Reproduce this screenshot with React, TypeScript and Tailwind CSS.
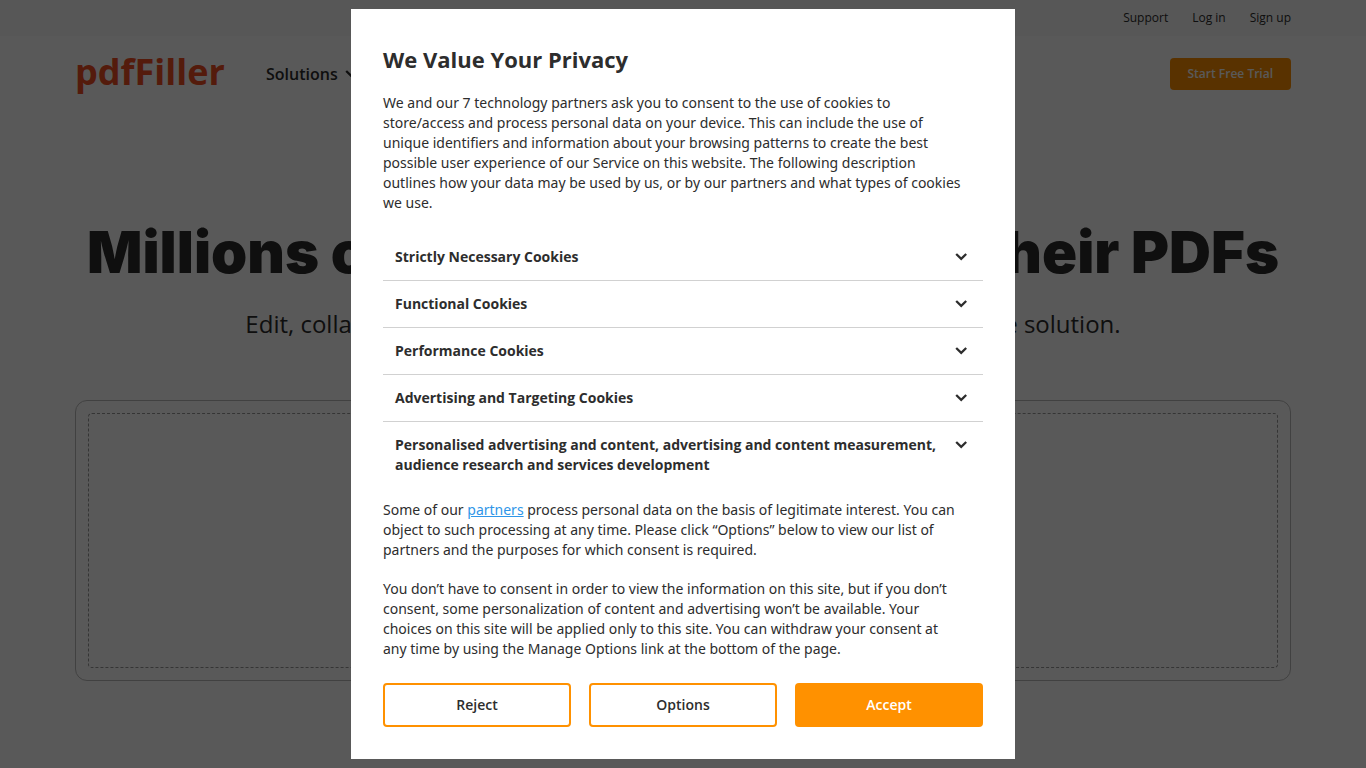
import React from "react";

const cookieGroups = [
  "Strictly Necessary Cookies",
  "Functional Cookies",
  "Performance Cookies",
  "Advertising and Targeting Cookies",
  "Personalised advertising and content, advertising and content measurement, audience research and services development",
];

function Chevron({ className }: { className: string }) {
  return (
    <svg viewBox="0 0 12 8" className={className} fill="none" stroke="currentColor" strokeWidth="2.3" aria-hidden="true">
      <path d="M1.2 1 L6.2 5.8 L11.2 1" />
    </svg>
  );
}

function TopBar() {
  return (
    <div className="h-9 bg-[#f8f8f8]">
      <nav className="mx-auto flex h-full max-w-[1216px] items-center justify-end gap-6 text-[12px] leading-4">
        <a href="#support">Support</a>
        <a href="#login">Log in</a>
        <a href="#signup">Sign up</a>
      </nav>
    </div>
  );
}

function Header() {
  return (
    <header className="mx-auto flex h-[76px] max-w-[1216px] items-center">
      <a href="#home" className="w-[147px] pb-1 text-[36px] leading-10 font-bold text-[#f04e23]">
        pdfFiller
      </a>
      <button type="button" className="ml-11 flex items-center gap-[7px] text-[16px] leading-6 font-semibold">
        Solutions
        <Chevron className="h-2 w-3" />
      </button>
      <button type="button" className="ml-auto h-8 rounded-[4px] bg-[#ff9100] px-[18px] text-[12px] leading-4 font-semibold text-white">
        Start Free Trial
      </button>
    </header>
  );
}

function Hero() {
  return (
    <main className="mx-auto max-w-[1216px] pt-[104px] pb-[87px]">
      <h1 className="mx-auto flex max-w-[1192px] justify-between font-[Inter,sans-serif] text-[58px] leading-[72px] font-black whitespace-nowrap">
        <span>Millions of</span> <span>users trust us</span> <span>their PDFs</span>
      </h1>
      <p className="mt-5 text-center text-[24px] leading-8">
        Edit, collaborate, sign, and share your documents with a single online solution.
      </p>
      <div className="mt-[60px] rounded-[12px] border border-[#bbbbbb] p-3">
        <div className="h-[255px] rounded-[4px] border border-dashed border-[#999999]" />
      </div>
    </main>
  );
}

function PrivacyDialog() {
  return (
    <div className="fixed inset-0 flex items-center justify-center bg-black/65">
      <section
        role="dialog"
        aria-modal="true"
        aria-labelledby="privacy-title"
        className="w-full max-w-[664px] bg-white p-8 text-[14px] leading-5 text-[#2d2d2d]"
      >
        <h2 id="privacy-title" className="text-[22px] leading-9 font-bold">
          We Value Your Privacy
        </h2>
        <p className="mt-4 pr-5 font-['Noto_Sans',sans-serif]">
          We and our 7 technology partners ask you to consent to the use of cookies to store/access and process personal
          data on your device. This can include the use of unique identifiers and information about your browsing
          patterns to create the best possible user experience of our Service on this website. The following description
          outlines how your data may be used by us, or by our partners and what types of cookies we use.
        </p>
        <ul className="mt-[21px] divide-y divide-[#d1d1d1]">
          {cookieGroups.map((name) => (
            <li key={name}>
              <button type="button" className="flex w-full items-start justify-between gap-4 py-[13px] pr-4 pl-3 text-left font-bold">
                <span>{name}</span>
                <Chevron className="mt-[6px] h-2 w-3 shrink-0" />
              </button>
            </li>
          ))}
        </ul>
        <p className="mt-3 pr-5 font-['Noto_Sans',sans-serif]">
          Some of our{" "}
          <a href="#partners" className="text-[#2f96e8] underline">
            partners
          </a>{" "}
          process personal data on the basis of legitimate interest. You can object to such processing at any time.
          Please click “Options” below to view our list of partners and the purposes for which consent is required.
        </p>
        <p className="mt-[19px] pr-5 font-['Noto_Sans',sans-serif]">
          You don’t have to consent in order to view the information on this site, but if you don’t consent, some
          personalization of content and advertising won’t be available. Your choices on this site will be applied only
          to this site. You can withdraw your consent at any time by using the Manage Options link at the bottom of the
          page.
        </p>
        <div className="mt-6 grid grid-cols-3 gap-[18px] font-semibold">
          <button type="button" className="h-11 rounded-[4px] border-2 border-[#ff9100]">
            Reject
          </button>
          <button type="button" className="h-11 rounded-[4px] border-2 border-[#ff9100]">
            Options
          </button>
          <button type="button" className="h-11 rounded-[4px] bg-[#ff9100] text-white">
            Accept
          </button>
        </div>
      </section>
    </div>
  );
}

export default function App() {
  return (
    <div className="min-h-screen bg-white font-['Open_Sans',sans-serif] text-[#2d2d2d]">
      <TopBar />
      <Header />
      <Hero />
      <PrivacyDialog />
    </div>
  );
}
